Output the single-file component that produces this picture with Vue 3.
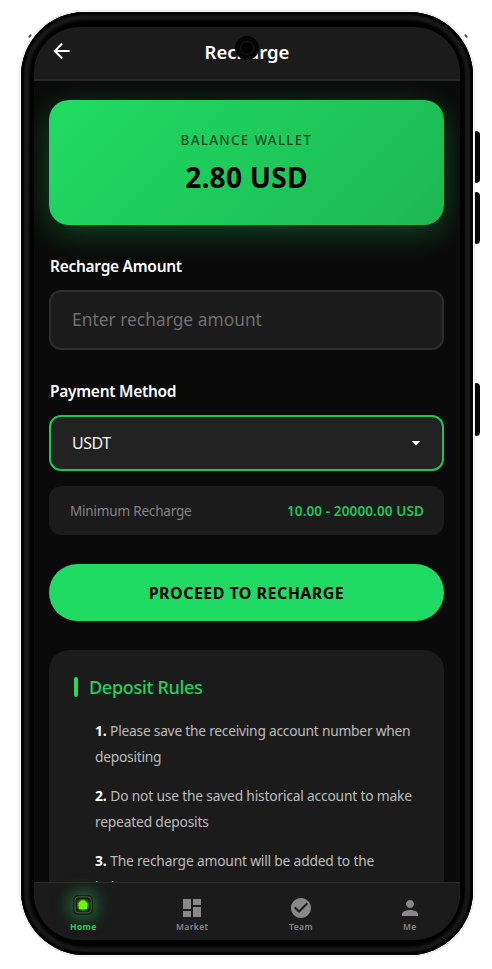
<script setup>
const rules = [
  ['Please save the receiving account number when', 'depositing'],
  ['Do not use the saved historical account to make', 'repeated deposits'],
  ['The recharge amount will be added to the', 'balance'],
]
const tabs = [
  { id: 'home', label: 'Home' },
  { id: 'market', label: 'Market' },
  { id: 'team', label: 'Team' },
  { id: 'me', label: 'Me' },
]
</script>

<template>
  <div class="stage">
    <span class="fleck left"></span>
    <span class="fleck right"></span>
    <span class="side-key volume-up"></span>
    <span class="side-key volume-down"></span>
    <span class="side-key power"></span>
    <div class="phone">
      <div class="screen">
        <header class="topbar">
          <svg class="back" viewBox="0 0 18 18">
            <path d="M16.6 9H2.2M9 1.8L1.8 9L9 16.2" fill="none" stroke="#fff" stroke-width="2" />
          </svg>
          <h1>Recharge</h1>
        </header>

        <main class="content">
          <section class="wallet">
            <div class="wallet-label">BALANCE WALLET</div>
            <div class="wallet-value">2.80 USD</div>
          </section>

          <label class="field-label amount-label">Recharge Amount</label>
          <div class="amount"><span>Enter recharge amount</span></div>

          <label class="field-label method-label">Payment Method</label>
          <div class="select">
            <span>USDT</span>
            <svg class="caret" viewBox="0 0 8 5"><path d="M0 0h8L4 4.6z" fill="#fff" /></svg>
          </div>

          <div class="limits">
            <span class="limits-name">Minimum Recharge</span>
            <span class="limits-value">10.00 - 20000.00 USD</span>
          </div>

          <button class="proceed"><span>PROCEED TO RECHARGE</span></button>

          <section class="rules">
            <h2><i></i><span>Deposit Rules</span></h2>
            <div v-for="(rule, i) in rules" :key="i" class="rule">
              <div class="line"><b>{{ i + 1 }}.</b> {{ rule[0] }}</div>
              <div class="line">{{ rule[1] }}</div>
            </div>
          </section>
        </main>

        <nav class="tabs">
          <div v-for="t in tabs" :key="t.id" class="tab" :class="t.id">
            <svg v-if="t.id === 'home'" class="icon home-icon" viewBox="0 0 20 20">
              <defs>
                <radialGradient id="lamp" cx="50%" cy="50%" r="58%">
                  <stop offset="0" stop-color="#8dff00" />
                  <stop offset="0.5" stop-color="#62e800" />
                  <stop offset="0.75" stop-color="#247a08" />
                  <stop offset="1" stop-color="#12300f" />
                </radialGradient>
              </defs>
              <rect x="0.5" y="0.5" width="19" height="19" rx="5" fill="#15281a" />
              <rect x="2" y="1.8" width="16.2" height="16" rx="3.5" fill="#172014" stroke="#4d5c4c" stroke-width="1" />
              <rect x="4" y="4" width="12" height="12" rx="3" fill="url(#lamp)" />
              <path d="M5.8 14V8.2L8.2 5.6H11.4L14 8.2V14z" fill="#76f500" />
            </svg>
            <svg v-else class="icon" viewBox="0 0 24 24">
              <path v-if="t.id === 'market'" d="M3 13h8V3H3v10zm0 8h8v-6H3v6zm10 0h8V11h-8v10zm0-18v6h8V3h-8z" />
              <path v-else-if="t.id === 'team'" d="M12 2C6.48 2 2 6.48 2 12s4.48 10 10 10 10-4.48 10-10S17.52 2 12 2zm-2 15l-5-5 1.41-1.41L10 14.17l7.59-7.59L19 8l-9 9z" />
              <path v-else d="M12 12c2.21 0 4-1.79 4-4s-1.79-4-4-4-4 1.79-4 4 1.79 4 4 4zm0 2c-2.67 0-8 1.34-8 4v2h16v-2c0-2.66-5.33-4-8-4z" />
            </svg>
            <span class="tab-label">{{ t.label }}</span>
          </div>
        </nav>
      </div>
      <div class="camera"><i></i></div>
    </div>
  </div>
</template>

<style>
body { margin: 0; background: #fff; }
</style>

<style scoped>
* { box-sizing: border-box; }
.stage {
  position: relative;
  width: 492px;
  height: 969px;
  padding: 12px 0 0 21px;
  overflow: hidden;
  background: #fff;
  font-family: "Noto Sans", "Open Sans", sans-serif;
}
.phone {
  position: relative;
  width: 452px;
  height: 943px;
  padding: 15px 13px;
  border-radius: 64px;
  background: #000;
  box-shadow: inset 0 0 2px 3px #000, inset 0 0 3px 8px #191919, 0 0 0 1px #fff, 0 0 0 2px #e9e9e9;
}
.side-key {
  position: absolute;
  left: 475px;
  width: 5px;
  height: 52px;
  border-radius: 1px 4px 4px 1px;
  background: #050505;
}
.volume-up { top: 131px; }
.volume-down { top: 192px; }
.power { top: 383px; height: 53px; }
.fleck { position: absolute; top: 34px; width: 2px; height: 4px; border-radius: 1px; background: #555; }
.fleck.left { left: 29px; transform: rotate(40deg); }
.fleck.right { left: 465px; transform: rotate(-40deg); }
.screen {
  display: flex;
  flex-direction: column;
  width: 426px;
  height: 913px;
  border-radius: 46px;
  overflow: hidden;
  background: #0a0a0a;
}
.topbar {
  position: relative;
  z-index: 1;
  display: flex;
  align-items: center;
  flex: none;
  height: 54px;
  padding: 0 19px;
  border-bottom: 2px solid #272727;
  background: #1b1b1b;
}
.back { width: 18px; height: 18px; margin-top: -4px; }
h1 {
  flex: 1;
  margin: -2px 18px 0 0;
  text-align: center;
  font-size: 18.5px;
  line-height: 24px;
  font-weight: 600;
  color: #fff;
}
.camera {
  position: absolute;
  z-index: 3;
  left: 214px;
  top: 24px;
  display: flex;
  align-items: center;
  justify-content: center;
  width: 24px;
  height: 24px;
  border-radius: 50%;
  background: #040404;
}
.camera i { width: 14px; height: 14px; border: 1px solid #1c1c1c; border-radius: 50%; background: #000; }
.content {
  display: flex;
  flex-direction: column;
  flex: 1;
  min-height: 0;
  padding: 19px 16px 0 15px;
  overflow: hidden;
}
.content > * { flex: none; }
.wallet {
  height: 125px;
  padding-top: 29px;
  border-radius: 20px;
  background: linear-gradient(135deg, #1fdc62, #1eb853);
  box-shadow: 0 8px 32px rgba(30, 215, 96, 0.3);
  text-align: center;
  color: #000;
}
.wallet-label { height: 22px; line-height: 22px; font-size: 13.5px; font-weight: 500; letter-spacing: 1.25px; color: rgba(0, 0, 0, 0.66); }
.wallet-value { margin-top: 7px; line-height: 38px; font-size: 28px; font-weight: 700; letter-spacing: 0.3px; }
.field-label { padding-left: 1px; line-height: 22px; font-size: 15.5px; font-weight: 600; letter-spacing: -0.28px; color: #fff; white-space: nowrap; }
.amount-label { margin-top: 30px; }
.amount {
  display: flex;
  align-items: center;
  height: 60px;
  margin-top: 13px;
  padding: 0 0 1px 21px;
  border: 2px solid #2d2d2d;
  border-radius: 12px;
  background: #1b1b1b;
  font-size: 17.3px;
  letter-spacing: 0.05px;
  color: #707070;
}
.method-label { margin-top: 30px; }
.select {
  display: flex;
  align-items: center;
  justify-content: space-between;
  height: 56px;
  margin-top: 13px;
  padding: 0 22px 0 21px;
  border: 2px solid #1ec65a;
  border-radius: 12px;
  background: #222;
  font-size: 16px;
  letter-spacing: -0.5px;
  color: #f4f4f4;
}
.caret { width: 8px; height: 5px; }
.limits {
  display: flex;
  align-items: center;
  justify-content: space-between;
  height: 49px;
  margin-top: 15px;
  padding: 0 20px 0 21px;
  border-radius: 12px;
  background: #1b1b1b;
}
.limits-name { font-size: 13.5px; letter-spacing: -0.18px; color: #858585; }
.limits-value { font-size: 13.5px; font-weight: 600; letter-spacing: 0.12px; color: #1ec75a; }
.proceed {
  height: 57px;
  margin-top: 29px;
  padding: 0;
  border: 0;
  border-radius: 29px;
  background: #20db63;
  font-family: inherit;
  font-size: 16px;
  font-weight: 700;
  letter-spacing: 0.45px;
  color: #000;
}
.rules {
  height: 300px;
  margin-top: 29px;
  padding: 25px 24px 0 25px;
  border-radius: 20px;
  background: #1b1b1b;
}
h2 {
  display: flex;
  align-items: center;
  gap: 11px;
  height: 24px;
  margin: 0;
  font-size: 18px;
  font-weight: 500;
  letter-spacing: -0.3px;
  color: #1ed35f;
}
h2 i { width: 4px; height: 20px; border-radius: 2px; background: #1fdb62; }
.rule { margin: 0 0 14px 21px; font-size: 13.8px; letter-spacing: -0.19px; color: #bbb; }
h2 + .rule { margin-top: 19px; letter-spacing: -0.25px; }
.line { height: 25.5px; line-height: 25.5px; white-space: nowrap; }
.line b { margin-right: 0.5px; color: #fff; }
.tabs {
  position: relative;
  z-index: 1;
  display: flex;
  flex: none;
  height: 58px;
  border-top: 1px solid #2c2c2c;
  background: #1b1b1b;
}
.tab {
  display: flex;
  flex-direction: column;
  align-items: center;
  flex: none;
  width: 108.8px;
  padding-top: 13px;
  color: #888;
}
.tab:first-child { margin-left: -5px; padding-top: 12px; }
.icon { width: 24px; height: 24px; fill: #888; }
.home-icon { width: 20px; height: 20px; margin-bottom: 5px; border-radius: 5px; box-shadow: 0 0 16px 3px rgba(30, 190, 85, 0.55); }
.tab-label { margin-top: 1px; line-height: 12px; font-size: 8.5px; font-weight: 600; letter-spacing: 0.4px; }
.home .tab-label { color: #1fcf5d; font-weight: 700; }
</style>
